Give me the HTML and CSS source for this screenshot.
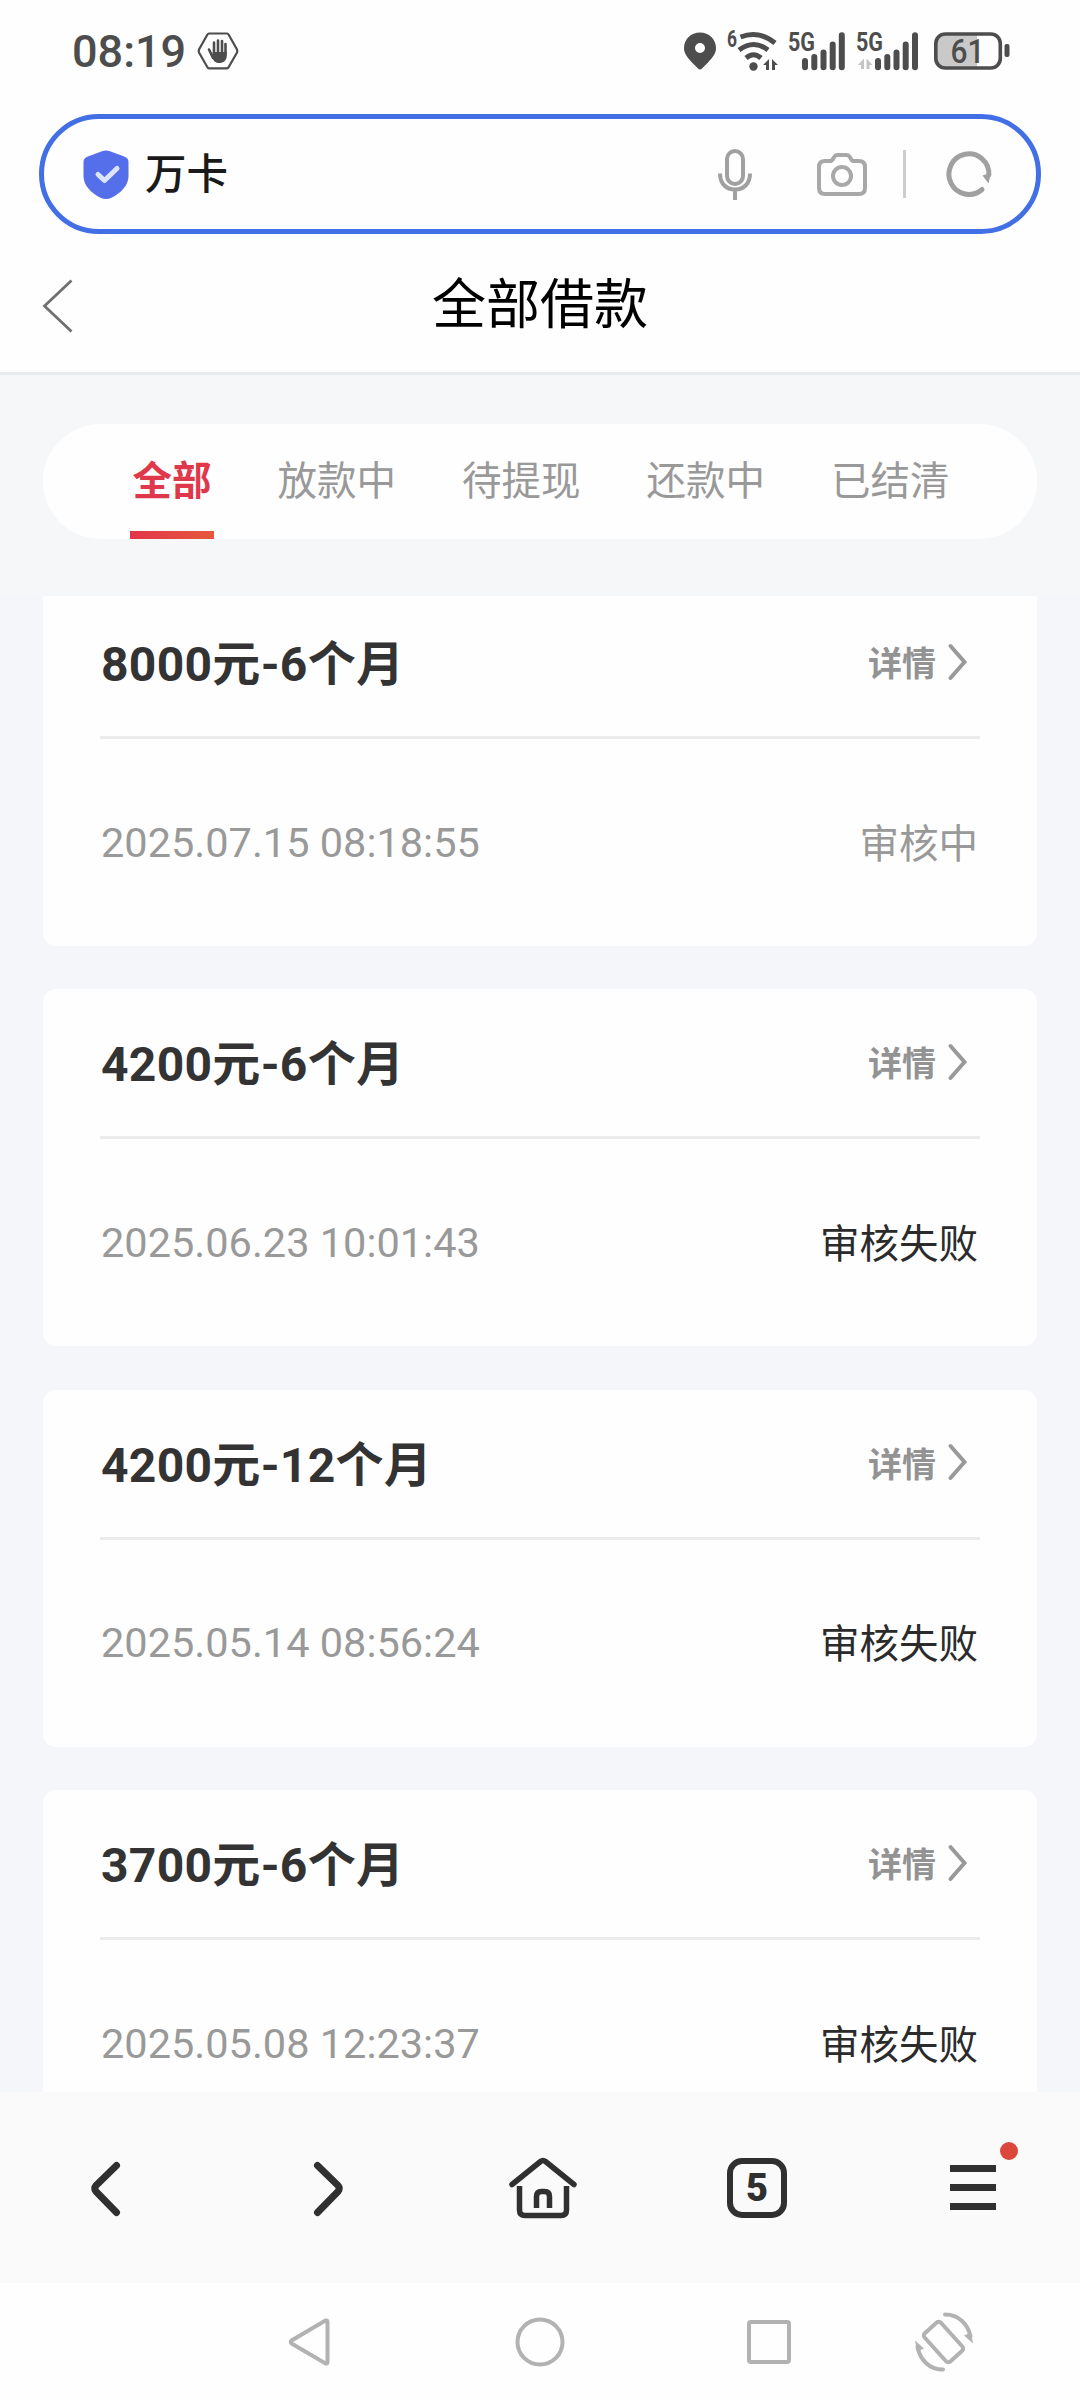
FILE: index.html
```html
<!DOCTYPE html>
<html lang="zh-CN">
<head>
    <meta charset="UTF-8">
    <title>全部借款</title>
    <link rel="stylesheet" href="styles.css">
</head>
<body>
    <div class="screen">
        <div class="status-bar">
            <span class="clock">08:19</span>
            <svg class="hand" width="42" height="38" viewBox="0 0 42 38">
                <path d="M12 1.500h18q1 0 1.700 1.200L40 17.500q.6 1.500 0 3L31.700 35q-.7 1.300-1.700 1.300H12q-1 0-1.700-1.300L2 20.500q-.6-1.500 0-3L10.300 2.700Q11 1.500 12 1.500z" fill="none" stroke="#4d4d4d" stroke-width="2.200"/>
                <path d="M17 21V10.500M21 20V8.500M25 20V9M28.500 22V12M16 26L12 17.500" stroke="#4d4d4d" stroke-width="2.600" stroke-linecap="round"/>
                <path d="M15.700 20h14.100v3.500c0 5-3.300 7.500-7.800 7.500-4 0-5.600-2.300-7-6z" fill="#4d4d4d"/>
            </svg>
            <div class="status-icons">
                <svg class="pin" width="32" height="38" viewBox="0 0 32 38">
                    <path fill-rule="evenodd" d="M16 .5C7 .5 0 7.300 0 16c0 6 4 10 8 14.500l6 6q2 2 4 0l6-6C28 26 32 22 32 16 32 7.300 25 .5 16 .5zM16 11a5 5 0 1 1 0 10 5 5 0 0 1 0-10z" fill="#4d4d4d"/>
                </svg>
                <svg class="wifi" width="52" height="40" viewBox="0 0 52 40">
                    <text class="label" x="0" y="16" font-size="23" textLength="10" lengthAdjust="spacingAndGlyphs">6</text>
                    <g fill="none" stroke="#4d4d4d" stroke-width="5">
                        <path d="M13.500 6Q32-1 48 12"/>
                        <path d="M12 19Q27 8 41 19"/>
                        <path d="M19 27Q26.500 20.500 34 27"/>
                    </g>
                    <circle cx="26.500" cy="35.500" r="4.200" fill="#4d4d4d"/>
                    <path d="M36 34l6-6v11h-3v-5zM45 28l6 6h-3v5h-3z" fill="#4d4d4d"/>
                </svg>
                <svg class="signal" width="56" height="38" viewBox="0 0 56 38">
                    <text class="label" x="-1" y="19" font-size="25" textLength="27" lengthAdjust="spacingAndGlyphs">5G</text>
                    <path d="M16 29v6.300M25.300 25v10.300M34.500 20.500v14.800M43.700 12.500v22.800M52.800 3.300v32" stroke="#4d4d4d" stroke-width="6" stroke-linecap="round"/>
                </svg>
                <svg class="signal-two" width="62" height="38" viewBox="0 0 62 38">
                    <text class="label" x="-1" y="19" font-size="25" textLength="27" lengthAdjust="spacingAndGlyphs">5G</text>
                    <path d="M1 33l6-6.500V37H4v-4zM9.500 26.500l6 6.500h-3v4h-3z" fill="#c4c4c4"/>
                    <path d="M21 29v6.300M30.300 25v10.300M39.500 20.500v14.800M48.700 12.500v22.800M58 3.300v32" stroke="#4d4d4d" stroke-width="6" stroke-linecap="round"/>
                </svg>
                <svg class="battery" width="76" height="38" viewBox="0 0 76 38">
                    <path d="M11 2h32v34H11q-9 0-9-9V11q0-9 9-9z" fill="#c9c9c9"/>
                    <rect x="1.800" y="2" width="64.500" height="34" rx="9.500" fill="none" stroke="#4d4d4d" stroke-width="3.600"/>
                    <rect x="70.500" y="12" width="5" height="13" rx="2" fill="#4d4d4d"/>
                    <text class="label level" x="16.500" y="31" font-size="34" textLength="34" lengthAdjust="spacingAndGlyphs">61</text>
                </svg>
            </div>
        </div>

        <div class="search-box">
            <svg class="shield" width="46" height="49" viewBox="0 0 46 49">
                <path d="M19 1.300q4-1.600 8 0l13.500 5Q45.500 8 45.500 12v14c0 10-8 17-17 21.800q-5.500 2.600-11 0C8.500 43 .5 36 .5 26V12q0-4 5-5.700z" fill="#556feb"/>
                <path d="M15 24.500l6.500 6L34 18.500" fill="none" stroke="#dde4ff" stroke-width="5" stroke-linecap="round" stroke-linejoin="round"/>
            </svg>
            <span class="site">万卡</span>
            <div class="search-tools">
                <svg width="36" height="52" viewBox="0 0 36 52" fill="none" stroke="#a0a0a0" stroke-width="4">
                    <rect x="10" y="3" width="16" height="33" rx="8"/>
                    <path d="M3 25.500c0 10 6 16 15 16s15-6 15-16M18 41.500V52"/>
                </svg>
                <svg class="camera" width="52" height="44" viewBox="0 0 52 44" fill="none" stroke="#a8a8a8" stroke-width="4">
                    <path d="M9 9h5q2 0 3-2l1.500-2.500Q19.500 3 21.500 3h9q2 0 3 1.500L35 7q1 2 3 2h5q6 0 6 6v21q0 6-6 6H9q-6 0-6-6V15q0-6 6-6z"/>
                    <circle cx="26" cy="24" r="9"/>
                </svg>
                <i class="divider"></i>
                <svg width="46" height="46" viewBox="0 0 46 46">
                    <path d="M36 38.500A20 20.300 0 1 1 42.900 24" fill="none" stroke="#a0a0a0" stroke-width="5" stroke-linecap="round"/>
                    <path d="M36.500 24.500l8.500-3-2.500 11z" fill="#a0a0a0"/>
                </svg>
            </div>
        </div>

        <div class="page-header">
            <svg class="back" width="30" height="54" viewBox="0 0 30 54">
                <path d="M28.500 1.500L1.500 27l27 25.500" fill="none" stroke="#707070" stroke-width="2.800"/>
            </svg>
            <h1>全部借款</h1>
        </div>

        <div class="tabs-wrap">
            <div class="tabs">
                <span class="tab active">全部</span>
                <span class="tab">放款中</span>
                <span class="tab">待提现</span>
                <span class="tab">还款中</span>
                <span class="tab">已结清</span>
            </div>
        </div>

        <div class="loan-list">
            <div class="card">
                <div class="card-top">
                    <span class="amount">8000元-6个月</span>
                    <span class="detail">详情<svg width="18" height="36" viewBox="0 0 18 36"><path d="M1.500 2L15.500 18l-14 16"/></svg></span>
                </div>
                <div class="card-bottom">
                    <span class="date">2025.07.15 08:18:55</span>
                    <span class="state pending">审核中</span>
                </div>
            </div>
            <div class="card">
                <div class="card-top">
                    <span class="amount">4200元-6个月</span>
                    <span class="detail">详情<svg width="18" height="36" viewBox="0 0 18 36"><path d="M1.500 2L15.500 18l-14 16"/></svg></span>
                </div>
                <div class="card-bottom">
                    <span class="date">2025.06.23 10:01:43</span>
                    <span class="state">审核失败</span>
                </div>
            </div>
            <div class="card">
                <div class="card-top">
                    <span class="amount">4200元-12个月</span>
                    <span class="detail">详情<svg width="18" height="36" viewBox="0 0 18 36"><path d="M1.500 2L15.500 18l-14 16"/></svg></span>
                </div>
                <div class="card-bottom">
                    <span class="date">2025.05.14 08:56:24</span>
                    <span class="state">审核失败</span>
                </div>
            </div>
            <div class="card">
                <div class="card-top">
                    <span class="amount">3700元-6个月</span>
                    <span class="detail">详情<svg width="18" height="36" viewBox="0 0 18 36"><path d="M1.500 2L15.500 18l-14 16"/></svg></span>
                </div>
                <div class="card-bottom">
                    <span class="date">2025.05.08 12:23:37</span>
                    <span class="state">审核失败</span>
                </div>
            </div>
        </div>

        <div class="toolbar">
            <div class="tool">
                <svg width="72" height="72" viewBox="0 0 72 72"><path d="M44.500 13.500L24 33.500q-2.500 3 0 6l20.500 21"/></svg>
            </div>
            <div class="tool">
                <svg width="72" height="72" viewBox="0 0 72 72"><path d="M29.500 13.500L50 33.500q2.500 3 0 6l-20.500 21"/></svg>
            </div>
            <div class="tool">
                <svg class="home" width="72" height="72" viewBox="0 0 72 72">
                    <path d="M8 32.500L36.500 9.500q2.500-2 5 0L70 32.500"/>
                    <path class="flat" d="M15.500 34V58q0 5.500 5.500 5.500h36q5.500 0 5.500-5.500V34M32.500 56V44.500q0-5 5-5h3q5 0 5 5V56"/>
                </svg>
            </div>
            <div class="tool"><span class="tab-count">5</span></div>
            <div class="tool">
                <div class="menu"><i></i><i></i><i></i></div>
            </div>
        </div>

        <div class="nav-bar">
            <svg width="42" height="50" viewBox="0 0 42 50"><path d="M37.500 3.500L4 23.200q-2.500 1.800 0 3.600l33.500 19.700q2 .5 2-1.500V5q0-2-2-1.500z"/></svg>
            <svg class="nav-home" width="50" height="50" viewBox="0 0 50 50"><circle cx="25" cy="25" r="22.500"/></svg>
            <svg class="nav-recent" width="46" height="46" viewBox="0 0 46 46"><rect x="3" y="3" width="40" height="40" rx="2"/></svg>
            <svg class="nav-rotate" width="60" height="60" viewBox="0 0 60 60">
                <rect x="18.500" y="11" width="22" height="38" rx="3" transform="rotate(-42 29.500 30)"/>
                <path d="M31 2.500c14 0 23 10 25.500 22M29 57.500C15 57.500 6 47.500 3.500 35"/>
                <path class="solid" d="M50 23.500l7-3 2 11zM10 36.500l-7 3-2-11z"/>
            </svg>
        </div>
    </div>
</body>
</html>
```

FILE: styles.css
```css
body {
    margin: 0;
    background-color: #fefefe;
    font-family: Roboto, "Noto Sans CJK SC", sans-serif;
}
svg {
    display: block;
    flex: none;
    overflow: visible;
}
.screen {
    width: 1080px;
    height: 2400px;
    display: flex;
    flex-direction: column;
    overflow: hidden;
}

/* status bar */
.status-bar {
    height: 114px;
    box-sizing: border-box;
    padding: 0 70px 12px 72px;
    display: flex;
    align-items: center;
    color: #4d4d4d;
}
.clock {
    font-size: 45px;
    font-weight: 500;
    width: 125px;
}
.status-icons {
    margin-left: auto;
    display: flex;
    align-items: center;
}
.label {
    font-weight: 700;
    fill: #4d4d4d;
}
.level {
    font-weight: 500;
}
.wifi {
    margin-left: 11px;
}
.signal {
    margin-left: 10px;
}
.signal-two {
    margin-left: 12px;
}
.battery {
    margin-left: 15px;
}

/* address box */
.search-box {
    height: 120px;
    margin: 0 39px;
    padding: 0 44px 0 39px;
    box-sizing: border-box;
    border: 5px solid #426fe6;
    border-radius: 60px;
    display: flex;
    align-items: center;
}
.site {
    margin: 2px 0 0 16px;
    font-size: 41.500px;
    font-weight: 500;
    line-height: 60px;
    color: #1a1a1a;
}
.search-tools {
    margin-left: auto;
    display: flex;
    align-items: center;
}
.camera {
    margin-left: 63px;
}
.divider {
    width: 3px;
    height: 48px;
    margin: 0 40px 0 35px;
    background-color: #cdcdcd;
}

.page-header {
    height: 141px;
    box-sizing: border-box;
    border-bottom: 3px solid #e9eaeb;
    padding: 0 43px 0 43px;
    display: flex;
    align-items: center;
}
.back {
    margin-top: 5px;
}
h1 {
    flex: 1;
    margin: 0 30px 0 0;
    padding-top: 5px;
    font-size: 54px;
    font-weight: 400;
    line-height: 80px;
    text-align: center;
    color: #000;
}

/* filter tabs */
.tabs-wrap {
    height: 221px;
    box-sizing: border-box;
    padding: 49px 43px 0;
    background-color: #f6f7f9;
}
.tabs {
    height: 115px;
    padding-left: 2px;
    border-radius: 58px;
    background-color: #fefefe;
    display: flex;
    justify-content: center;
    gap: 66px;
}
.tab {
    font-size: 39.500px;
    line-height: 116px;
    color: #999;
}
.tab.active {
    position: relative;
    font-weight: 700;
    color: #e0384b;
}
.tab.active::after {
    content: "";
    position: absolute;
    left: -3px;
    right: -2px;
    bottom: 0;
    height: 8px;
    background: linear-gradient(to right, #e3364a, #e5593c);
}

/* loan cards */
.loan-list {
    height: 1496px;
    overflow: hidden;
    padding: 0 43px;
    background-color: #f5f6f9;
}
.card {
    height: 357px;
    margin-bottom: 43.400px;
    padding: 0 57px;
    box-sizing: border-box;
    border-radius: 13px;
    background-color: #fefefe;
}
/* the list is scrolled a little under the tabs */
.card:first-child {
    margin-top: -7px;
    border-radius: 0 0 13px 13px;
}
.card-top {
    height: 150px;
    box-sizing: border-box;
    border-bottom: 3px solid #ebebeb;
    display: flex;
    justify-content: space-between;
    align-items: center;
}
.card-bottom {
    height: 207px;
    display: flex;
    justify-content: space-between;
    align-items: center;
}
.amount {
    padding: 0 0 5px 1px;
    font-size: 48px;
    font-weight: 700;
    letter-spacing: 0.300px;
    color: #333;
}
.detail {
    display: flex;
    align-items: center;
    gap: 13px;
    padding: 0 13px 2px 0;
    font-size: 34px;
    font-weight: 700;
    color: #939393;
}
.detail path {
    fill: none;
    stroke: #999;
    stroke-width: 4;
    stroke-linecap: round;
}
.date {
    padding: 0 0 1px 1px;
    font-size: 41.500px;
    color: #999;
}
.state {
    padding: 0 2px 5px 0;
    font-size: 39.500px;
    color: #2b2b2b;
}
.state.pending {
    color: #999;
}

/* browser toolbar */
.toolbar {
    height: 191px;
    background-color: #fafafa;
    display: flex;
}
.tool {
    flex: 1;
    display: flex;
    align-items: center;
    justify-content: center;
}
.tool path {
    fill: none;
    stroke: #303030;
    stroke-width: 7;
    stroke-linecap: round;
    stroke-linejoin: round;
}
.tool .home path {
    stroke-width: 5.500;
}
.tool .home .flat {
    stroke-linecap: butt;
}
.tab-count {
    width: 60px;
    height: 60px;
    margin-left: 2px;
    box-sizing: border-box;
    border: 6px solid #303030;
    border-radius: 15px;
    font-size: 38px;
    font-weight: 900;
    line-height: 49px;
    text-align: center;
    color: #303030;
}
.menu {
    position: relative;
    width: 46px;
    margin-left: 2px;
    display: flex;
    flex-direction: column;
    gap: 11.500px;
}
.menu i {
    height: 7.500px;
    background-color: #303030;
}
.menu::after {
    content: "";
    position: absolute;
    top: -23px;
    right: -22px;
    width: 18px;
    height: 18px;
    border-radius: 50%;
    background-color: #dc473c;
}

/* system navigation */
.nav-bar {
    height: 117px;
    padding-left: 288px;
    display: flex;
    align-items: center;
    fill: none;
    stroke: #b2b2b2;
    stroke-width: 4;
    stroke-linecap: round;
}
.nav-home {
    margin-left: 185px;
}
.nav-recent {
    margin-left: 181px;
}
.nav-rotate {
    margin-left: 122px;
}
.solid {
    fill: #b2b2b2;
    stroke: none;
}
```
